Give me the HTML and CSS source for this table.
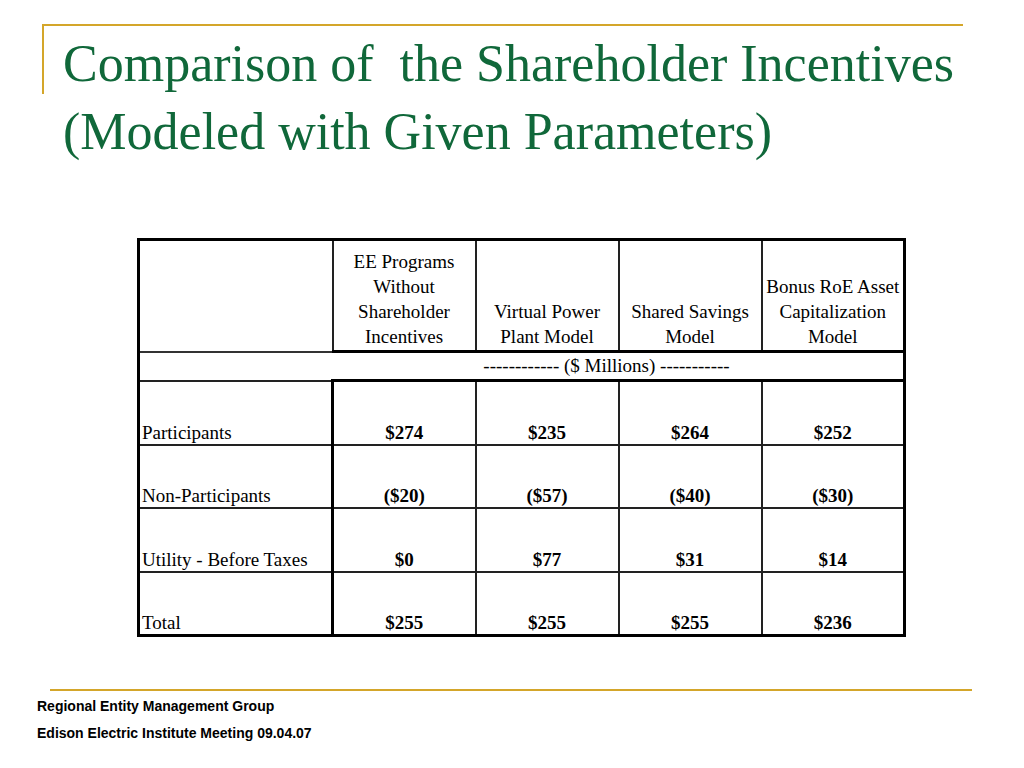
FILE: index.html
```html
<!DOCTYPE html>
<html>
<head>
<meta charset="utf-8">
<link rel="stylesheet" href="styles.css">
</head>
<body>
<div class="slide">
  <header class="head">
    <h1 class="title">Comparison of&nbsp; the Shareholder Incentives<br>(Modeled with Given Parameters)</h1>
  </header>
  <main class="body">
    <table class="grid">
      <colgroup>
        <col class="c-label"><col class="c-val"><col class="c-val"><col class="c-val"><col class="c-val">
      </colgroup>
      <tr class="hdr">
        <td class="blank"></td>
        <td class="h first">EE Programs Without Shareholder Incentives</td>
        <td class="h">Virtual Power Plant Model</td>
        <td class="h">Shared Savings Model</td>
        <td class="h">Bonus RoE Asset Capitalization Model</td>
      </tr>
      <tr class="units">
        <td colspan="5">------------ ($ Millions) -----------</td>
      </tr>
      <tr class="row">
        <td class="lab">Participants</td>
        <td class="v first">$274</td><td class="v">$235</td><td class="v">$264</td><td class="v">$252</td>
      </tr>
      <tr class="row">
        <td class="lab">Non-Participants</td>
        <td class="v first">($20)</td><td class="v">($57)</td><td class="v">($40)</td><td class="v">($30)</td>
      </tr>
      <tr class="row">
        <td class="lab">Utility - Before Taxes</td>
        <td class="v first">$0</td><td class="v">$77</td><td class="v">$31</td><td class="v">$14</td>
      </tr>
      <tr class="row">
        <td class="lab">Total</td>
        <td class="v first">$255</td><td class="v">$255</td><td class="v">$255</td><td class="v">$236</td>
      </tr>
    </table>
  </main>
  <footer class="foot">
    <p>Regional Entity Management Group</p>
    <p>Edison Electric Institute Meeting 09.04.07</p>
  </footer>
</div>
</body>
</html>
```

FILE: styles.css
```css
html, body {
  margin: 0;
  padding: 0;
  background: #fff;
}
.slide {
  width: 1024px;
  height: 768px;
  overflow: hidden;
  position: relative;
  font-family: "Liberation Serif", "Times New Roman", serif;
}
.head {
  margin: 24px 61px 0 42px;
  height: 68px;
  border-top: 2px solid #d4a62a;
  border-left: 2px solid #d4a62a;
}
.title {
  margin: 0;
  padding: 4px 0 0 19px;
  font-weight: normal;
  font-size: 52px;
  line-height: 68px;
  color: #10683a;
  white-space: nowrap;
}
.body {
  padding: 144px 0 0 137px;
}
.grid {
  border-collapse: collapse;
  border: 3px solid #000;
  width: 767px;
  table-layout: fixed;
  font-size: 19px;
  color: #000;
}
.c-label { width: 194px; }
.c-val { width: 143px; }
.grid td {
  padding: 0;
  border: 2px solid #222;
}
.hdr td {
  height: 108px;
  vertical-align: bottom;
  text-align: center;
  line-height: 25px;
  padding: 0 1px 1px;
  white-space: normal;
}
.hdr td.h {
  border-bottom: 3px solid #000;
}
.hdr td.blank {
  border-bottom: 2px solid #333;
}
.units td {
  height: 24px;
  text-align: center;
  vertical-align: top;
  padding: 2px 0 0 170px;
  line-height: 22px;
}
.row td {
  height: 61.5px;
  vertical-align: bottom;
  line-height: 22px;
  padding-bottom: 0;
}
.units + .row td.v { border-top: 3px solid #000; }
.row td.lab {
  text-align: left;
  padding-left: 2px;
}
.row td.v {
  text-align: center;
  font-weight: bold;
}
.row td.first {
  border-left: 3px solid #000;
}
.foot {
  margin-top: 52px;
  margin-left: 50px;
  width: 922px;
  border-top: 2px solid #d4a62a;
  font-family: "Liberation Sans", Arial, sans-serif;
  font-weight: bold;
  font-size: 14px;
  color: #000;
}
.foot p {
  margin: 0 0 0 -13px;
  line-height: 27px;
}
.foot p:first-child {
  margin-top: 2px;
}
```
